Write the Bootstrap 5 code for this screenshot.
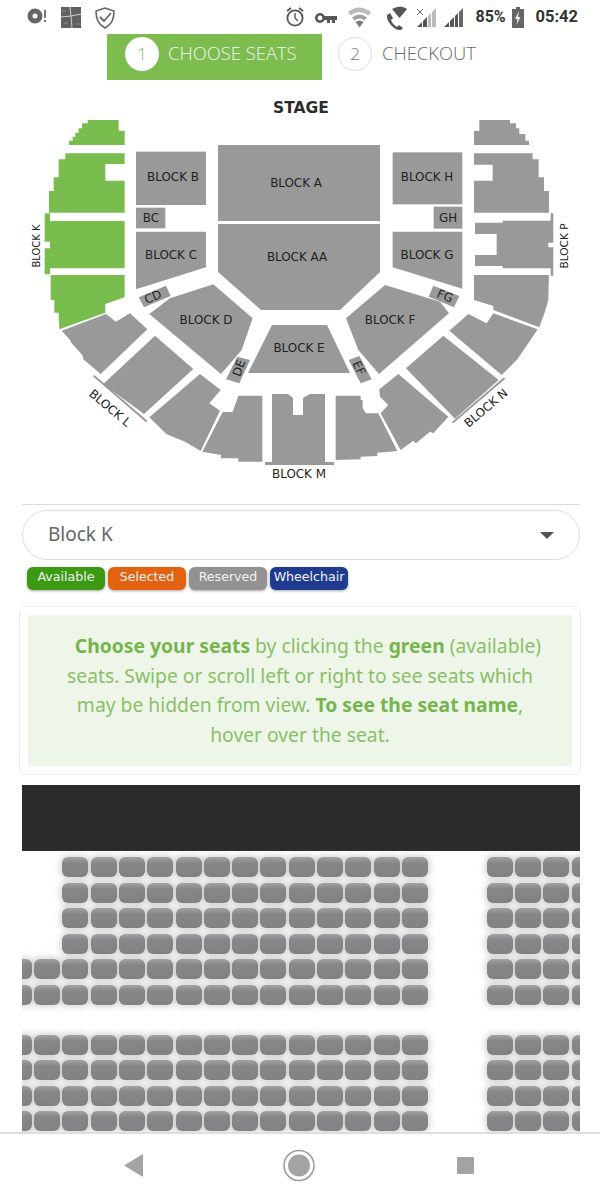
<!DOCTYPE html>
<html lang="en">
<head>
<meta charset="utf-8">
<title>Choose seats</title>
<link href="https://cdn.jsdelivr.net/npm/bootstrap@5.3.0/dist/css/bootstrap.min.css" rel="stylesheet">
<style>
html,body{height:100%}
body{width:600px;height:1200px;overflow:hidden;background:#fff;font-family:"Noto Sans","Open Sans",sans-serif;color:#666}
.status-bar{height:34px;flex:none;color:#333;font-family:Roboto,"Liberation Sans",sans-serif;font-weight:700;font-size:16.5px}
.status-bar svg{display:block;flex:none}
.pct{margin-left:6px;width:29px;font-size:16px;white-space:nowrap}
.clock{margin-left:11px;margin-right:22px}
.stepper{height:46px;flex:none;padding-left:107px;font-family:"Open Sans",sans-serif;font-weight:300;font-size:18.4px}
.step-on{width:215px;padding:0 0 6px 18px;background:#7dbd50;color:#f0f8ea;gap:9px}
.step-off{padding:0 0 6px 16px;color:#666;gap:10px}
.step-num{width:34px;height:34px;font-size:17px;font-weight:300}
.step-lbl{margin-bottom:3px}
.step-on .step-num{background:#fff;color:#7dbd50}
.step-off .step-num{border:1px solid #ddd;background:#fff;color:#777}
.map{display:block;flex:none;width:600px;height:420px}
.sec{fill:#999}.grn{fill:#7abd4f}
.map text{font-family:"DejaVu Sans",sans-serif;font-size:11.9px;fill:#222;text-anchor:middle}
.map text.stage{font-size:15.5px;font-weight:700;fill:#2b2b2b}
.map text.side-k{font-size:10px}
.map text.side-p{font-size:10.6px}
.rule{margin:4px 20px 0 22px;opacity:1;border-color:#dcdcdc;flex:none}
.block-pick{width:auto;height:50px;margin:5px 20px 0 22px;padding:0 25px;border-color:#ddd;font-size:19px;color:#666;flex:none}
.pick-txt{margin-bottom:2px}
.caret{border-left:7px solid transparent;border-right:7px solid transparent;border-top:7px solid #555}
.legend{margin:7px 0 0 27px;gap:3px;flex:none}
.leg{width:78px;height:23px;font-family:"DejaVu Sans",sans-serif;font-size:12.6px;font-weight:400;color:#f2f2f2;padding:0;line-height:20px;box-shadow:0 1px 3px rgba(0,0,0,.35)}
.leg-a{background:#3b9a12}.leg-s{background:#e3620f}.leg-r{background:#929292}.leg-w{background:#1f3b90}
.help-card{margin:16px 19px 0;padding:8px;border-color:#ececec;flex:none}
.help-body{height:151px;background:#eef6ea;color:#8abf68;font-size:19.3px;line-height:29.5px;padding:16px 28px 0}
.help-body p{text-indent:16px}
.help-body b{color:#75b54c;font-weight:700}
.dark-bar{height:66px;margin:10px 20px 0 22px;background:#2b2c2a;flex:none}
.seat-zone{margin:0 20px 0 22px;min-height:0;padding-top:6px}
.seat-line{margin-left:-16.2px;margin-bottom:5.5px;gap:2.3px}
.seat-line.far{margin-bottom:30px}
.seat,.seat-void{width:26px;height:20px;flex:none}
.seat{border-radius:6px;background:linear-gradient(#a2a2a4,#878789 30%,#828284);box-shadow:0 0 6px 2px rgba(130,130,130,.33);filter:blur(.5px)}
.nav-strip{height:68px;flex:none;border-top:2px solid #dedede;background:#fff;position:relative}
.nav-strip svg{display:block}
</style>
</head>
<body class="d-flex flex-column">

<div class="status-bar d-flex align-items-center">
<svg width="130" height="34" viewBox="0 0 130 34">
<circle cx="35" cy="16" r="5" fill="none" stroke="#666" stroke-width="5"/>
<rect x="44" y="10" width="2" height="8" fill="#777"/><rect x="44" y="20" width="2" height="2" fill="#777"/>
<rect x="61" y="7" width="20" height="21" fill="#606060"/>
<path d="M70 7l1 9-10 1M71 16l10-2M71 16l1 12" stroke="#d0d0d0" stroke-width="1" fill="none"/>
<path d="M61 11h5M76 24h5M64 23h4" stroke="#999" stroke-width=".8" fill="none"/>
<path d="M105 8l9 3c0 8-2 13-9 17-7-4-9-9-9-17z" fill="none" stroke="#666" stroke-width="1.6"/>
<path d="M100 17l4 4 7-8" fill="none" stroke="#666" stroke-width="1.8"/>
</svg>
<div class="flex-grow-1"></div>
<svg width="190" height="34" viewBox="280 0 190 34">
<circle cx="296" cy="18" r="7.6" fill="none" stroke="#555" stroke-width="1.8"/>
<path d="M296 13v5l3 3" fill="none" stroke="#555" stroke-width="1.4"/>
<path d="M288 11l4-3M304 11l-4-3" stroke="#555" stroke-width="1.8"/>
<circle cx="321" cy="18" r="3.7" fill="none" stroke="#555" stroke-width="2.6"/>
<path d="M325 16h13v4h-2v3h-3v-3h-2v3h-3v-3h-3z" fill="#555"/>
<path d="M349 12q11-9 23 0l-2.500 3.500q-9-7-18 0z" fill="#bbb"/>
<path d="M353 17.500q7.500-6 15 0l-2.500 3q-5-4-10 0z" fill="#a0a0a0"/>
<path d="M356.500 22q4-3 8 0l-4 5.500z" fill="#7c7c7c"/>
<path d="M391 13l3 5-2 2c1 3 3 5 6 7l2-2 4 3-2 2c-6 1-15-8-14-15z" fill="#555"/>
<path d="M393 9q9-5 15 0l-7.500 9z" fill="#555"/>
<path d="M418 9l6 6M424 9l-6 6" stroke="#666" stroke-width="1"/>
<path d="M418 27l5-5v5zM424 21l4-4v10h-4z" fill="#555"/><path d="M429 16l3-3v14h-3zM433 12l4-4v19h-4z" fill="#bbb"/>
<path d="M445 27l5-5v5zM451 21l4-4v10h-4zM456 16l3-3v14h-3z" fill="#555"/><path d="M460 12l4-4v19h-4z" fill="#666"/>
</svg>
<span class="pct">85%</span>
<svg class="ms-2" width="12" height="22" viewBox="0 0 12 22"><path d="M4 1h4v2h4v19H0V3h4z" fill="#666"/><path d="M7 5L3 13h2.500l-1 6 4-8H6z" fill="#eee"/></svg>
<span class="clock">05:42</span>
</div>

<div class="stepper d-flex">
<div class="step-on d-flex align-items-center"><span class="step-num rounded-circle d-flex align-items-center justify-content-center">1</span><span class="step-lbl">CHOOSE SEATS</span></div>
<div class="step-off d-flex align-items-center"><span class="step-num rounded-circle d-flex align-items-center justify-content-center">2</span><span class="step-lbl">CHECKOUT</span></div>
</div>

<svg class="map" viewBox="0 80 600 420">
<g transform="translate(20 90) scale(.3333)">
<path class="grn" d="M147 165V152H158V140H166V128H176V115H186V100H203V90H296V122H314V165Z"/>
<path class="grn" d="M136 190H314V222H256V272H314V368H87V303H101V262H116V208H136Z"/>
<path class="grn" d="M74 370H90V393H314V535H90V553H74V475H90V455H74Z"/>
<path class="grn" d="M92 555H314V622L256 642V668L118 718L116 668H103V630H92Z"/>
<rect class="sec" x="348" y="185" width="210" height="160"/>
<rect class="sec" x="348" y="353" width="88" height="62"/>
<path class="sec" d="M348 425H558V532L348 598Z"/>
<path class="sec" d="M356 622L438 587L452 618L372 652Z"/>
</g>
<g transform="translate(300 90) scale(.3333)">
<rect class="sec" x="278" y="187" width="209" height="156"/>
<rect class="sec" x="401" y="350" width="86" height="66"/>
<path class="sec" d="M278 425H487V596L278 532Z"/>
<path class="sec" d="M400 587L478 618L462 652L386 620Z"/>
<path class="sec" d="M522 165V123H538V90H630V100H648V115H658V132H676V152H687V165Z"/>
<path class="sec" d="M522 190H698V208H716V262H732V303H747V368H522V272H578V224H522Z"/>
<path class="sec" d="M525 398H608V392H752V370H760V458H745V472H760V557H752V535H608V528H525V495H590V432H525Z"/>
<path class="sec" d="M522 555H747L745 630L735 665L718 712L580 660V648L522 630Z"/>
</g>
<path class="sec" d="M218 145H380V221H218ZM218 224H380V272L340 310H261L218 272Z"/>
<path class="sec" d="M272 325H327L350 373H248Z"/>
<path class="sec" d="M272 394H288L293 398V415H303V398L310 394H325V463H272Z"/>
<path class="sec" d="M265 462H334V465H265Z"/>
<g transform="translate(40 300) scale(.3333)">
<path class="sec" d="M328 42L390-5L520-47L638 55L605 150L543 222Z"/>
<path class="sec" d="M592 170L630 180L598 250L558 238Z"/>
<path class="sec" d="M65 92L198 42L228 65L270 40L322 88L182 222L130 178L127 165L95 130L90 120Z"/>
<path class="sec" d="M345 107L460 207L312 342L190 252Z"/>
<path class="sec" d="M158 228L164 226L322 362L318 367Z"/>
<path class="sec" d="M480 222L542 270L508 310L540 332L482 453L435 425L380 403L328 352Z"/>
<path class="sec" d="M667 287V485H595V475H543V465L487 455L548 336H578L595 287Z"/>
</g>
<g transform="translate(290 300) scale(.3333)">
<path class="sec" d="M168 55L285-45L450 5L477 40L267 222L205 150Z"/>
<path class="sec" d="M176 180L208 168L245 238L212 250Z"/>
<path class="sec" d="M137 287H212V300H218V325L228 340H265L322 453L262 458V468L212 470V478L137 480Z"/>
<path class="sec" d="M268 268L325 222L475 350L430 400L420 395L378 430L370 422L332 450L272 340L295 315L270 290Z"/>
<path class="sec" d="M460 107L626 240L495 356L348 205Z"/>
<path class="sec" d="M642 232L486 366L490 370L646 236Z"/>
<path class="sec" d="M535 42L590 70L610 40L743 88L715 130L682 178L635 225L478 92Z"/>
</g>
<text class="stage" x="301" y="113">STAGE</text>
<text x="173" y="181">BLOCK B</text>
<text x="151" y="222">BC</text>
<text x="171" y="259">BLOCK C</text>
<text x="296" y="187">BLOCK A</text>
<text x="297" y="261">BLOCK AA</text>
<text x="427" y="181">BLOCK H</text>
<text x="448" y="222">GH</text>
<text x="427" y="259">BLOCK G</text>
<text x="206" y="324">BLOCK D</text>
<text x="390" y="324">BLOCK F</text>
<text x="299" y="352">BLOCK E</text>
<text x="299" y="478">BLOCK M</text>
<text transform="translate(153 297) rotate(-22)" y="4">CD</text>
<text transform="translate(445 296) rotate(22)" y="4">FG</text>
<text transform="translate(239 368) rotate(-70)" y="4">DE</text>
<text transform="translate(359 368) rotate(65)" y="4">EF</text>
<text class="side-k" transform="translate(36 246) rotate(-90)" y="4">BLOCK K</text>
<text class="side-p" transform="translate(564 246) rotate(-90)" y="4">BLOCK P</text>
<text transform="translate(110 408) rotate(40)" y="4">BLOCK L</text>
<text transform="translate(486 408) rotate(-40)" y="4">BLOCK N</text>
</svg>

<hr class="rule">
<div class="block-pick form-control rounded-pill d-flex align-items-center justify-content-between"><span class="pick-txt">Block K</span><span class="caret"></span></div>
<div class="legend d-flex">
<span class="leg leg-a badge rounded-2">Available</span>
<span class="leg leg-s badge rounded-2">Selected</span>
<span class="leg leg-r badge rounded-2">Reserved</span>
<span class="leg leg-w badge rounded-2">Wheelchair</span>
</div>

<div class="help-card card">
<div class="help-body text-center"><p class="mb-0"><b>Choose your seats</b> by clicking the <b>green</b> (available) seats. Swipe or scroll left or right to see seats which may be hidden from view. <b>To see the seat name</b>, hover over the seat.</p></div>
</div>

<div class="dark-bar"></div>
<div id="seats" class="seat-zone flex-grow-1 overflow-hidden"></div>

<div class="nav-strip">
<svg width="600" height="66" viewBox="0 1134 600 66">
<path d="M124 1165.500L143 1154V1177Z" fill="#a3a3a3"/>
<circle cx="299" cy="1165.500" r="15" fill="none" stroke="#9a9a9a" stroke-width="1.500"/>
<circle cx="299" cy="1165.500" r="11" fill="#a3a3a3"/>
<rect x="457" y="1157" width="17" height="17" rx="1" fill="#a3a3a3"/>
</svg>
</div>

<script src="https://cdn.jsdelivr.net/npm/bootstrap@5.3.0/dist/js/bootstrap.bundle.min.js"></script>
<script>
var zone=document.getElementById('seats');
for(var r=0;r<10;r++){
  var line=document.createElement('div');
  line.className='seat-line d-flex'+(r==5?' far':'');
  for(var k=0;k<21;k++){
    var on=(k<=14&&(r>=4||k>=2))||k>=17;
    var s=document.createElement('div');
    s.className=on?'seat':'seat-void';
    line.appendChild(s);
  }
  zone.appendChild(line);
}
</script>
</body>
</html>
